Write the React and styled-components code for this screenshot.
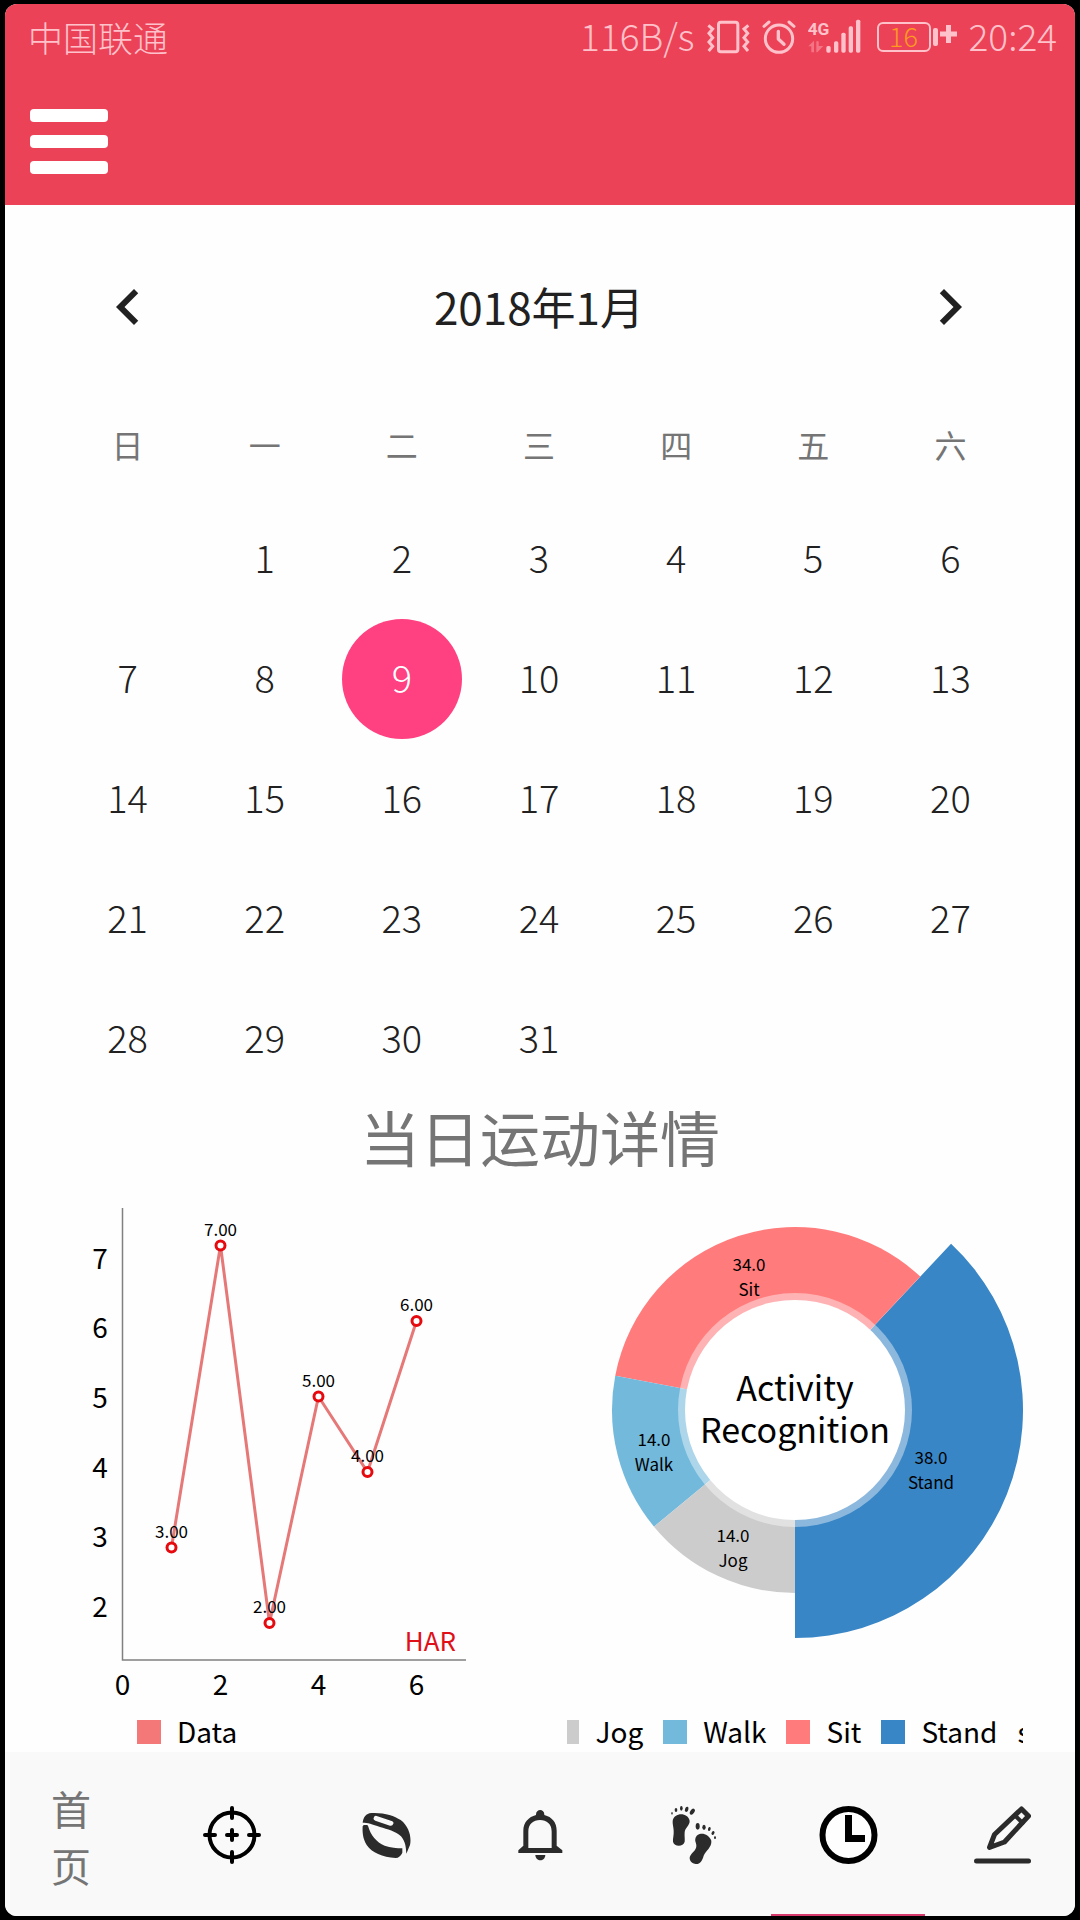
import React, { useState } from "react";
import styled, { createGlobalStyle } from "styled-components";

const GlobalStyle = createGlobalStyle`
  * { box-sizing: border-box; }
  body {
    margin: 0;
    background: #000;
    font-family: "Noto Sans CJK SC", "Noto Sans", sans-serif;
    font-weight: 300;
  }
  button { font: inherit; color: inherit; background: none; border: 0; padding: 0; cursor: pointer; }
  svg { display: block; }
`;

const Frame = styled.div`
  min-height: 100vh;
  padding: 4px 5px;
  background: #000;
  display: flex;
`;

const Screen = styled.div`
  flex: 1;
  min-width: 0;
  display: flex;
  flex-direction: column;
  border-radius: 12px;
  overflow: hidden;
  background: #fefefe;
`;

const Header = styled.header`
  background: #ec4257;
`;

const StatusBar = styled.div`
  height: 68px;
  padding: 0 18px 2px 23px;
  display: flex;
  align-items: center;
  justify-content: space-between;
  color: #ffc1ca;
`;

const Carrier = styled.span`
  font-size: 35px;
  line-height: 40px;
`;

const StatusText = styled.span`
  padding-bottom: 4px;
  font-size: 37px;
  line-height: 40px;
`;

const StatusGroup = styled.div`
  display: flex;
  align-items: center;
  gap: 12px;
`;

const Battery = styled.div`
  display: flex;
  align-items: center;
  gap: 2px;
  margin-left: 4px;
`;

const BatteryBody = styled.span`
  width: 54px;
  height: 30px;
  border: 2px solid currentColor;
  border-radius: 6px;
  color: #ffc1ca;
  display: flex;
  align-items: center;
  justify-content: center;
`;

const BatteryLevel = styled.span`
  padding-bottom: 2px;
  color: #ff9a1e;
  font-size: 27px;
  line-height: 28px;
`;

const BatteryNub = styled.span`
  width: 5px;
  height: 18px;
  border-radius: 2px;
  background: currentColor;
`;

const Toolbar = styled.div`
  padding: 37px 25px 31px;
`;

const MenuButton = styled.button`
  display: flex;
  flex-direction: column;
  gap: 13px;
  width: 78px;
`;

const MenuBar = styled.span`
  height: 13px;
  border-radius: 4px;
  background: #fff;
`;

const Main = styled.main`
  flex: 1;
  display: flex;
  flex-direction: column;
`;

const Calendar = styled.section`
  padding: 66px 56px 0 54px;
  color: #212121;
`;

const MonthRow = styled.div`
  display: flex;
  align-items: center;
  justify-content: space-between;
  padding: 0 33px;
  margin-bottom: 50px;
`;

const MonthTitle = styled.h1`
  margin: 0;
  padding-bottom: 2px;
  font-size: 44px;
  line-height: 70px;
  font-weight: 400;
`;

const Days = styled.table`
  width: 100%;
  table-layout: fixed;
  border-collapse: collapse;
  text-align: center;
`;

const WeekdayCell = styled.th`
  height: 106px;
  padding: 0 0 4px;
  color: #757575;
  font-size: 32px;
  font-weight: 400;
`;

const DayCell = styled.td`
  height: 120px;
  padding: 0;
`;

const DayButton = styled.button`
  width: 120px;
  height: 120px;
  border-radius: 50%;
  font-size: 38px;
  line-height: 40px;
  && {
    padding-bottom: 4px;
    color: ${(p) => (p.$selected ? "#fff" : "#212121")};
    background: ${(p) => (p.$selected ? "#ff4081" : "transparent")};
  }
`;

const DetailTitle = styled.h2`
  margin: 0;
  color: #757575;
  font-size: 60px;
  line-height: 74px;
  font-weight: 400;
  text-align: center;
`;

const Charts = styled.section`
  display: grid;
  grid-template-columns: 1fr 1fr;
  gap: 54px;
  padding: 18px 52px 0;
  font-weight: 400;
`;

const ChartCard = styled.figure`
  margin: 0;
  min-width: 0;
`;

const ChartDrawing = styled.svg`
  width: 100%;
  height: auto;
`;

const Legend = styled.figcaption`
  height: 39px;
  display: flex;
  align-items: center;
  justify-content: ${(p) => (p.$align === "start" ? "flex-start" : "center")};
  gap: 20px;
  padding: ${(p) => (p.$align === "start" ? "0 0 0 80px" : "0 4px 0 0")};
  overflow: hidden;
  font-size: 28px;
  line-height: 39px;
  white-space: nowrap;
  color: #000;
`;

const LegendEntry = styled.span`
  flex: none;
  display: flex;
  align-items: center;
  gap: 16px;
`;

const Swatch = styled.span`
  width: 24px;
  height: 24px;
  background: ${(p) => p.$color};
`;

const TabBar = styled.nav`
  display: flex;
  height: 164px;
  margin: 0 -4px;
  background: #f9f9f9;
`;

const Tab = styled.button`
  flex: 1;
  display: flex;
  align-items: center;
  justify-content: center;
  && {
    border-bottom: 2px solid ${(p) => (p.$active ? "#d83a6e" : "transparent")};
    padding-top: 4px;
  }
`;

const HomeLabel = styled.span`
  width: 54px;
  padding: 4px 14px 0 0;
  color: #757575;
  font-size: 40px;
  line-height: 57px;
  font-weight: 400;
  word-break: break-all;
`;

const VibrateIcon = () => (
  <svg width="43" height="36" viewBox="20 25 129 108" fill="none" stroke="currentColor" strokeWidth="9">
    <rect x="54.500" y="34.500" width="58" height="89" rx="7" />
    <path d="M24 44l13 11-11 13 11 13-11 13 11 13-12 14M144 44l-13 11 11 13-11 13 11 13-11 13 12 14" strokeWidth="9" />
  </svg>
);

const AlarmIcon = () => (
  <svg width="34" height="36" viewBox="182 25 102 108" fill="none" stroke="currentColor" strokeWidth="9" strokeLinecap="round">
    <circle cx="233" cy="84" r="41" />
    <path d="M231 62v23l17 16" strokeWidth="10" strokeLinejoin="round" />
    <path d="M188 47l15-13M278 47l-15-13" />
  </svg>
);

const SignalIcon = () => (
  <svg width="53" height="36" viewBox="316 25 159 108" fill="currentColor">
    <text x="315" y="72" fontFamily="Roboto, sans-serif" fontWeight="700" fontSize="52">4G</text>
    <path opacity=".4" d="M317 107l17-17v35h-8v-18zM341 92h7v14l14 0-18 19h-3z" />
    <rect x="371" y="106" width="13" height="20" rx="5" />
    <rect x="394" y="92" width="13" height="34" rx="5" />
    <rect x="416" y="66" width="13" height="60" rx="5" />
    <rect x="438" y="47" width="13" height="79" rx="5" />
    <rect x="460" y="27" width="13" height="99" rx="5" />
  </svg>
);

const ChargingIcon = () => (
  <svg width="17" height="24" viewBox="0 0 17 24" stroke="currentColor" strokeWidth="5">
    <path d="M0 9h17M8.500 0v18" />
  </svg>
);

const Chevron = ({ d }) => (
  <svg width="72" height="72" viewBox="0 0 24 24" fill="#212121">
    <path d={d} />
  </svg>
);

const TargetIcon = () => (
  <svg width="58" height="58" viewBox="0 0 58 58" fill="none" stroke="#000" strokeWidth="4" strokeLinecap="round">
    <circle cx="29" cy="29" r="22.500" />
    <path d="M29 2v10M29 46v10M2 29h10M46 29h10M29 24v10M24 29h10" />
  </svg>
);

const BandIcon = () => (
  <svg width="49" height="47" viewBox="64 66 147 141" fill="#2b2b2b">
    <path
      fillRule="evenodd"
      d="M66 98C68 82 76 70 92 69C130 67 160 77 180 90C206 110 213 142 208 165L197 191C196 170 194 155 181 139C165 123 140 118 118 111C95 102 80 98 66 98ZM108 78Q101 76 99 84Q97 90 104 92L148 107Q155 109 158 101Q160 95 153 93Z"
    />
    <path d="M66 109Q67 105 72 105H79Q82 106 83 110C90 135 107 156 132 167C150 174 168 174 185 175V188Q178 203 165 204C125 202 94 188 78 165C66 146 65 125 66 109Z" />
  </svg>
);

const BellIcon = () => (
  <svg width="45" height="52" viewBox="530 60 135 156" fill="#2b2b2b">
    <path
      fillRule="evenodd"
      d="M531 192V184L546 170V125C546 100 562 84 584 78C583 58 610 58 609 78C632 84 646 100 646 125V170L663 184V192ZM561 177H631V128C631 105 616 93 596 93C576 93 561 105 561 128Z"
    />
    <path d="M582 198H612C611 219 583 219 582 198Z" />
  </svg>
);

const FeetIcon = () => (
  <svg width="48" height="60" viewBox="58 48 144 180" fill="#2b2b2b">
    <path d="M66 96C70 70 112 69 117 96C117 110 103 116 102 130C101 142 103 150 102 158C98 175 70 174 67 158C66 148 70 138 69 125C69 115 65 105 66 96Z" />
    <path d="M134 150C137 128 172 128 182 155C184 175 165 185 159 200C155 215 148 226 135 225C118 222 114 208 119 200C125 190 136 185 137 172C138 162 132 158 134 150Z" />
    <ellipse cx="64" cy="73" rx="2" ry="4" />
    <ellipse cx="76" cy="63" rx="4" ry="6" />
    <ellipse cx="92" cy="58" rx="4" ry="7" />
    <ellipse cx="108" cy="61" rx="5" ry="8" transform="rotate(20 108 61)" />
    <ellipse cx="125" cy="68" rx="6" ry="10" transform="rotate(35 125 68)" />
    <ellipse cx="141" cy="112" rx="6" ry="10" />
    <ellipse cx="160" cy="115" rx="5" ry="8" />
    <ellipse cx="176" cy="120" rx="4" ry="6" transform="rotate(15 176 120)" />
    <ellipse cx="187" cy="132" rx="4" ry="6" transform="rotate(30 187 132)" />
    <ellipse cx="193" cy="146" rx="3" ry="4" />
  </svg>
);

const ClockIcon = () => (
  <svg width="59" height="58" viewBox="0 0 59 58">
    <circle cx="29.500" cy="29" r="26" fill="#fefefe" stroke="#000" strokeWidth="6" />
    <path d="M26 9h7v20h13v7H26z" />
  </svg>
);

const PenIcon = () => (
  <svg width="57" height="58" viewBox="0 0 57 58" fill="none" stroke="#2b2b2b" strokeWidth="5" strokeLinejoin="round" strokeLinecap="round">
    <path d="M15.500 41.500L20.500 28.500L47.500 3L54.500 10L30.500 36Z" />
    <path d="M41 9.500l7.500 7.500" strokeWidth="4" />
    <path d="M2.500 55h52" />
  </svg>
);

const lineData = [3, 7, 2, 5, 4, 6];
const pointX = (x) => 65.5 + 49 * x;
const pointY = (v) => 583 - 75.5 * v;
const tickY = (v) => 555 - 69.6 * v;

const LineChart = () => (
  <ChartDrawing viewBox="0 0 456 521" role="img" aria-label="HAR">
    <path d="M65.500 17V469H409" fill="none" stroke="#808080" strokeWidth="1.500" />
    <g fontSize="28" textAnchor="middle">
      {[2, 3, 4, 5, 6, 7].map((v) => (
        <text key={v} x="43" y={tickY(v) + 10}>{v}</text>
      ))}
      {[0, 2, 4, 6].map((v) => (
        <text key={v} x={pointX(v)} y="504">{v}</text>
      ))}
    </g>
    <text x="399" y="460" fontSize="26" textAnchor="end" fill="#e01018">HAR</text>
    <polyline
      points={lineData.map((v, i) => `${pointX(i + 1)},${pointY(v)}`).join(" ")}
      fill="none"
      stroke="#e67878"
      strokeWidth="3"
    />
    {lineData.map((v, i) => (
      <g key={i}>
        <text x={pointX(i + 1)} y={pointY(v) - 10} fontSize="17" textAnchor="middle">{v.toFixed(2)}</text>
        <circle cx={pointX(i + 1)} cy={pointY(v)} r="4.500" fill="#fff" stroke="#e60a0f" strokeWidth="3" />
      </g>
    ))}
  </ChartDrawing>
);

const slices = [
  { name: "Stand", value: 38, color: "#3986c6", radius: 228, x: 364, y: 267 },
  { name: "Sit", value: 34, color: "#ff7b7c", radius: 183, x: 182, y: 74 },
  { name: "Walk", value: 14, color: "#72b9dc", radius: 183, x: 87, y: 249 },
  { name: "Jog", value: 14, color: "#cccccc", radius: 183, x: 166, y: 345 },
];

const legendOrder = ["Jog", "Walk", "Sit", "Stand"];

const sectorPath = (from, to, r) => {
  const at = (share) => {
    const a = Math.PI / 2 - share * 0.02 * Math.PI;
    return `${228 + r * Math.cos(a)} ${219 + r * Math.sin(a)}`;
  };
  return `M228 219L${at(from)}A${r} ${r} 0 0 0 ${at(to)}Z`;
};

const PieChart = () => {
  let start = 0;
  return (
    <ChartDrawing viewBox="0 0 456 521" role="img" aria-label="Activity Recognition">
      {slices.map((s) => {
        const from = start;
        start += s.value;
        return <path key={s.name} d={sectorPath(from, start, s.radius)} fill={s.color} />;
      })}
      <circle cx="228" cy="219" r="117" fill="#fff" fillOpacity=".42" />
      <circle cx="228" cy="219" r="110" fill="#fff" />
      <g fontSize="17" textAnchor="middle">
        {slices.map((s) => (
          <React.Fragment key={s.name}>
            <text x={s.x} y={s.y + 6}>{s.value.toFixed(1)}</text>
            <text x={s.x} y={s.y + 31}>{s.name}</text>
          </React.Fragment>
        ))}
      </g>
      <text fontSize="34" textAnchor="middle">
        <tspan x="228" y="210">Activity</tspan>
        <tspan x="228" y="252">Recognition</tspan>
      </text>
    </ChartDrawing>
  );
};

const weekdays = ["日", "一", "二", "三", "四", "五", "六"];
const weeks = [0, 1, 2, 3, 4].map((w) =>
  weekdays.map((_, d) => {
    const day = w * 7 + d;
    return day >= 1 && day <= 31 ? day : null;
  })
);

const iconTabs = [
  { name: "定位", Icon: TargetIcon },
  { name: "手环", Icon: BandIcon },
  { name: "提醒", Icon: BellIcon },
  { name: "步数", Icon: FeetIcon },
  { name: "历史", Icon: ClockIcon },
  { name: "编辑", Icon: PenIcon },
];

export default function App() {
  const [selected, setSelected] = useState(9);
  const [tab, setTab] = useState("历史");
  return (
    <Frame>
      <GlobalStyle />
      <Screen>
        <Header>
          <StatusBar>
            <Carrier>中国联通</Carrier>
            <StatusGroup>
              <StatusText>116B/s</StatusText>
              <VibrateIcon />
              <AlarmIcon />
              <SignalIcon />
              <Battery>
                <BatteryBody><BatteryLevel>16</BatteryLevel></BatteryBody>
                <BatteryNub />
                <ChargingIcon />
              </Battery>
              <StatusText>20:24</StatusText>
            </StatusGroup>
          </StatusBar>
          <Toolbar>
            <MenuButton aria-label="菜单">
              <MenuBar />
              <MenuBar />
              <MenuBar />
            </MenuButton>
          </Toolbar>
        </Header>
        <Main>
          <Calendar>
            <MonthRow>
              <button aria-label="上个月"><Chevron d="M15.410 7.410L14 6l-6 6 6 6 1.410-1.410L10.830 12z" /></button>
              <MonthTitle>2018年1月</MonthTitle>
              <button aria-label="下个月"><Chevron d="M10 6L8.590 7.410 13.170 12l-4.580 4.590L10 18l6-6z" /></button>
            </MonthRow>
            <Days>
              <thead>
                <tr>{weekdays.map((d) => <WeekdayCell key={d} scope="col">{d}</WeekdayCell>)}</tr>
              </thead>
              <tbody>
                {weeks.map((week, w) => (
                  <tr key={w}>
                    {week.map((day, d) => (
                      <DayCell key={d}>
                        {day && (
                          <DayButton $selected={day === selected} onClick={() => setSelected(day)}>{day}</DayButton>
                        )}
                      </DayCell>
                    ))}
                  </tr>
                ))}
              </tbody>
            </Days>
          </Calendar>
          <DetailTitle>当日运动详情</DetailTitle>
          <Charts>
            <ChartCard>
              <LineChart />
              <Legend $align="start">
                <LegendEntry><Swatch $color="#f47878" />Data</LegendEntry>
              </Legend>
            </ChartCard>
            <ChartCard>
              <PieChart />
              <Legend>
                {legendOrder.map((name) => (
                  <LegendEntry key={name}>
                    <Swatch $color={slices.find((s) => s.name === name).color} />
                    {name}
                  </LegendEntry>
                ))}
                <LegendEntry>s</LegendEntry>
              </Legend>
            </ChartCard>
          </Charts>
        </Main>
        <TabBar>
          <Tab $active={tab === "首页"} onClick={() => setTab("首页")}><HomeLabel>首页</HomeLabel></Tab>
          {iconTabs.map(({ name, Icon }) => (
            <Tab key={name} aria-label={name} $active={tab === name} onClick={() => setTab(name)}><Icon /></Tab>
          ))}
        </TabBar>
      </Screen>
    </Frame>
  );
}
